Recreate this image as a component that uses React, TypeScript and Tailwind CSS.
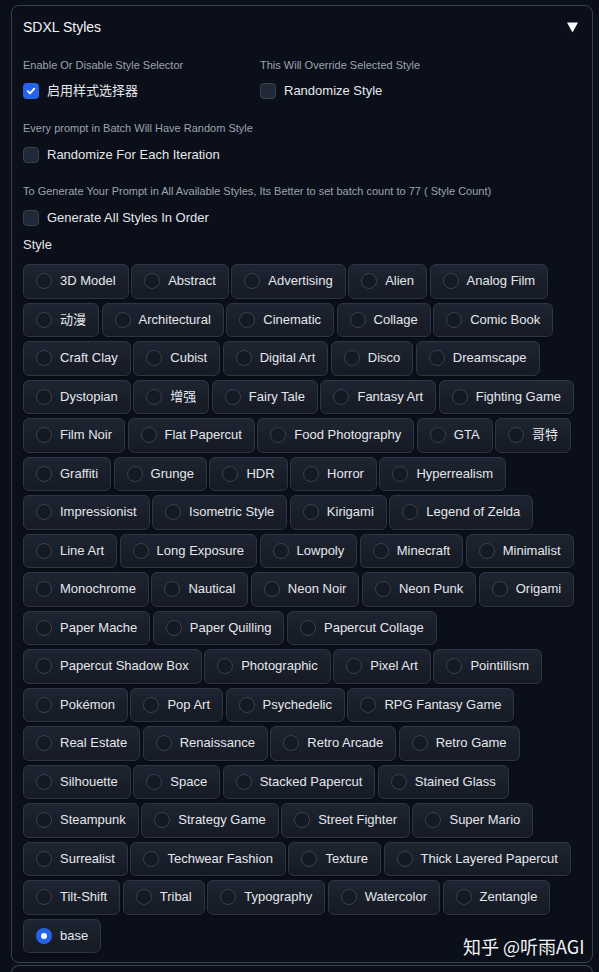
import React from 'react';

const rows: string[] = [
  '3D Model', 'Abstract', 'Advertising', 'Alien', 'Analog Film',
  '动漫', 'Architectural', 'Cinematic', 'Collage', 'Comic Book',
  'Craft Clay', 'Cubist', 'Digital Art', 'Disco', 'Dreamscape',
  'Dystopian', '增强', 'Fairy Tale', 'Fantasy Art', 'Fighting Game',
  'Film Noir', 'Flat Papercut', 'Food Photography', 'GTA', '哥特',
  'Graffiti', 'Grunge', 'HDR', 'Horror', 'Hyperrealism',
  'Impressionist', 'Isometric Style', 'Kirigami', 'Legend of Zelda',
  'Line Art', 'Long Exposure', 'Lowpoly', 'Minecraft', 'Minimalist',
  'Monochrome', 'Nautical', 'Neon Noir', 'Neon Punk', 'Origami',
  'Paper Mache', 'Paper Quilling', 'Papercut Collage',
  'Papercut Shadow Box', 'Photographic', 'Pixel Art', 'Pointillism',
  'Pokémon', 'Pop Art', 'Psychedelic', 'RPG Fantasy Game',
  'Real Estate', 'Renaissance', 'Retro Arcade', 'Retro Game',
  'Silhouette', 'Space', 'Stacked Papercut', 'Stained Glass',
  'Steampunk', 'Strategy Game', 'Street Fighter', 'Super Mario',
  'Surrealist', 'Techwear Fashion', 'Texture', 'Thick Layered Papercut',
  'Tilt-Shift', 'Tribal', 'Typography', 'Watercolor', 'Zentangle',
  'base',
];

const font = { fontFamily: '"Liberation Sans", "Noto Sans CJK SC", sans-serif' };

function Checkbox({ checked, label }: { checked?: boolean; label: string }) {
  return (
    <div className="flex h-[20px] items-center gap-[8px]">
      {checked ? (
        <span className="flex h-[16px] w-[16px] items-center justify-center rounded-[4px] bg-[#2563eb]">
          <svg width="10" height="10" viewBox="0 0 10 10" fill="none">
            <path d="M1.8 5.2 L4 7.3 L8.3 2.6" stroke="white" strokeWidth="1.8" strokeLinecap="round" strokeLinejoin="round" />
          </svg>
        </span>
      ) : (
        <span className="h-[16px] w-[16px] rounded-[4px] border border-[#374151] bg-[#1f2937]" />
      )}
      <span className="text-[13px] leading-[20px] text-[#e5e7eb]">{label}</span>
    </div>
  );
}

function Info({ text }: { text: string }) {
  return <div className="text-[11px] leading-[16px] text-[#9ca3af]">{text}</div>;
}

function Pill({ label, selected }: { label: string; selected?: boolean }) {
  return (
    <label className="flex h-[34.5px] items-center gap-[8px] rounded-[6px] border border-[#2e3543] bg-linear-to-b from-[#1e2431] to-[#151a24] px-[12px] shadow-[0_1px_2px_rgba(0,0,0,0.4)]">
      {selected ? (
        <span className="flex h-[16px] w-[16px] items-center justify-center rounded-full bg-[#2563eb]">
          <span className="h-[6px] w-[6px] rounded-full bg-white" />
        </span>
      ) : (
        <span className="h-[16px] w-[16px] rounded-full border border-[#374151] bg-[#141923]" />
      )}
      <span className="text-[13px] leading-[20px] text-[#e5e7eb]">{label}</span>
    </label>
  );
}

export default function App() {
  return (
    <div className="relative min-h-[972px] overflow-hidden bg-[#0b0f19] pt-[5px]" style={font}>
      <div className="ml-[11px] w-[582px] rounded-[8px] border border-[#374151] px-[11px] pb-[9px]">
        <div className="flex h-[42px] items-center justify-between">
          <span className="text-[14px] font-medium text-[#f3f4f6]">SDXL Styles</span>
          <svg width="11" height="11" viewBox="0 0 11 11" className="mr-[3px]">
            <polygon points="0,0.5 11,0.5 5.5,10.5" fill="#f9fafb" />
          </svg>
        </div>

        <div className="mt-[9px] grid grid-cols-[237px_1fr]">
          <div>
            <Info text="Enable Or Disable Style Selector" />
            <div className="mt-[8px]">
              <Checkbox checked label="启用样式选择器" />
            </div>
          </div>
          <div>
            <Info text="This Will Override Selected Style" />
            <div className="mt-[8px]">
              <Checkbox label="Randomize Style" />
            </div>
          </div>
        </div>

        <div className="mt-[19px]">
          <Info text="Every prompt in Batch Will Have Random Style" />
        </div>
        <div className="mt-[9px]">
          <Checkbox label="Randomize For Each Iteration" />
        </div>

        <div className="mt-[18px]">
          <Info text="To Generate Your Prompt in All Available Styles, Its Better to set batch count to 77 ( Style Count)" />
        </div>
        <div className="mt-[9px]">
          <Checkbox label="Generate All Styles In Order" />
        </div>

        <div className="mt-[9px] text-[13px] leading-[16px] text-[#e5e7eb]">Style</div>

        <div className="mt-[11px] flex flex-wrap gap-x-[2.5px] gap-y-[4px]">
          {rows.map((s) => (
            <Pill key={s} label={s} selected={s === 'base'} />
          ))}
        </div>
      </div>

      <div className="ml-[11px] mt-[2px] h-[20px] w-[582px] rounded-t-[8px] border border-b-0 border-[#374151]" />

      <div
        className="absolute left-[463px] top-[934px] text-[18px] leading-[24px] text-[#f3f4f6]"
        style={{ fontFamily: '"Noto Sans CJK SC", "Noto Sans", sans-serif' }}
      >
        知乎 @听雨AGI
      </div>
    </div>
  );
}
